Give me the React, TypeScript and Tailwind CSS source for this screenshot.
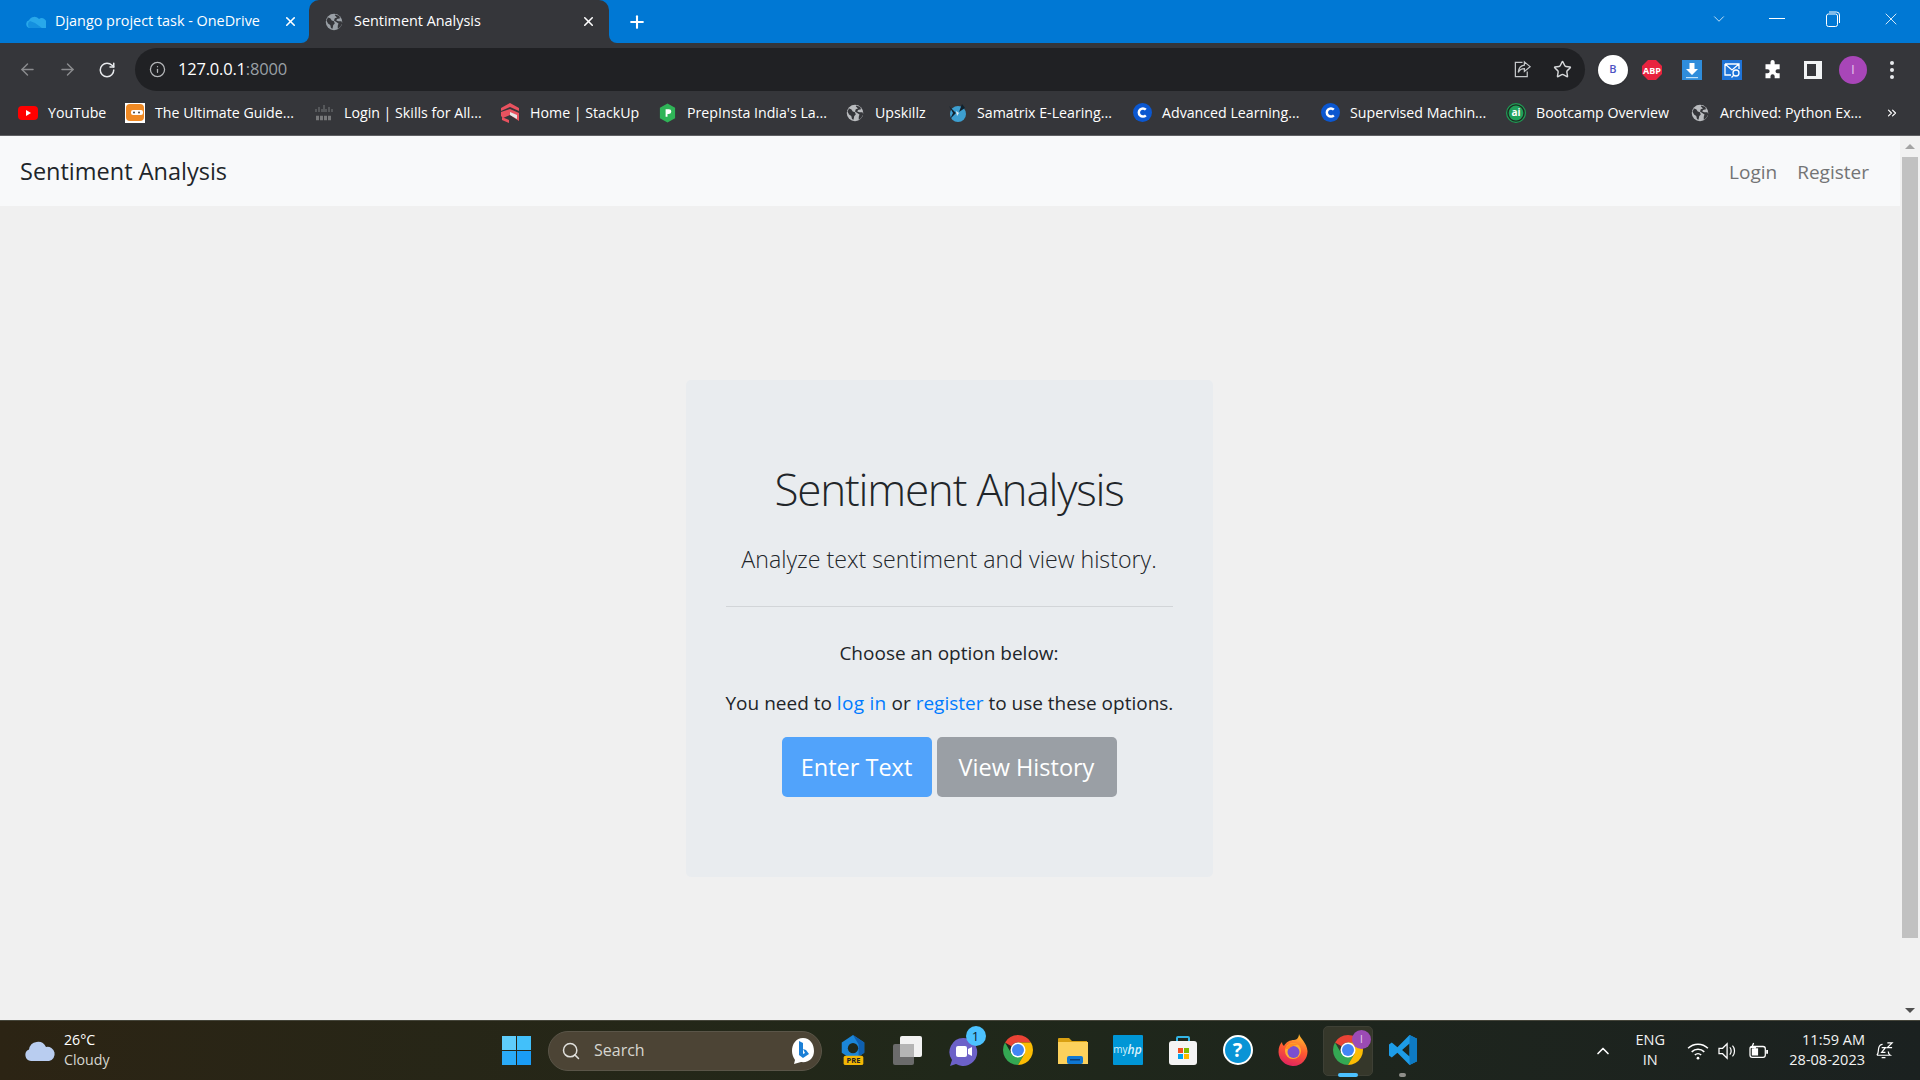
import React from 'react';
import { ArrowLeft, ArrowRight, RotateCw, Info, Star, X, Plus, ChevronDown, ChevronUp, Search, ChevronsRight } from 'lucide-react';

// Globe favicon used by Chrome for pages with no icon
function Globe({ className = 'w-[18px] h-[18px]', fg = '#35363a', bg = '#b9bbbe' }: { className?: string; fg?: string; bg?: string }) {
  return (
    <svg viewBox="0 0 24 24" className={className}>
      <circle cx="12" cy="12" r="11" fill={bg} />
      <path d="M4 6l3 1 2 3 3 1 1 3-2 2-1 5-2-1-1-4-3-2-2-4zM14 2l5 2 1 3-4 1-1 2 3 1 4 0 1 3-3 5-3 2 0-4 1-3-3-2-3-2 1-3 3-1-3-3z" fill={fg} />
    </svg>
  );
}

function ChromeLogo({ className = 'w-[32px] h-[32px]' }: { className?: string }) {
  return (
    <svg viewBox="0 0 48 48" className={className}>
      <path d="M24 4A20 20 0 0 1 41.32 14H24A10 10 0 0 0 15.34 19L6.68 14A20 20 0 0 1 24 4Z" fill="#ea4335" />
      <path d="M6.68 14A20 20 0 0 0 24 44L32.66 29H15.34Z" fill="#34a853" />
      <path d="M41.32 14A20 20 0 0 1 24 44L32.66 29 24 14Z" fill="#fbbc04" />
      <circle cx="24" cy="24" r="10" fill="#fff" />
      <circle cx="24" cy="24" r="8" fill="#4285f4" />
    </svg>
  );
}

function CoursedotC() {
  return (
    <svg viewBox="0 0 20 20" className="w-[19px] h-[19px]">
      <circle cx="10" cy="10" r="10" fill="#0b57d0" />
      <path d="M13.5 7a4.3 4.3 0 1 0 0 6" fill="none" stroke="#fff" strokeWidth="2.6" />
    </svg>
  );
}

const bookmarks: { label: string; w: string; icon: React.ReactNode }[] = [
  {
    label: 'YouTube',
    w: 'w-[57px]',
    icon: (
      <svg viewBox="0 0 20 20" className="w-[20px] h-[20px]">
        <rect x="0" y="3" width="20" height="14" rx="4" fill="#f00" />
        <path d="M8 7l5 3-5 3z" fill="#fff" />
      </svg>
    ),
  },
  {
    label: 'The Ultimate Guide...',
    w: 'w-[139px]',
    icon: (
      <svg viewBox="0 0 20 20" className="w-[20px] h-[20px]">
        <rect width="20" height="20" fill="#fff" />
        <rect x="1" y="1" width="18" height="17" rx="4" fill="#f08a24" />
        <rect x="6" y="7" width="12" height="5" rx="2" fill="#fff" />
        <circle cx="9" cy="9.5" r="1" fill="#444" />
        <circle cx="14" cy="9.5" r="1" fill="#444" />
      </svg>
    ),
  },
  {
    label: 'Login | Skills for All...',
    w: 'w-[136px]',
    icon: (
      <svg viewBox="0 0 20 20" className="w-[20px] h-[20px]" stroke="#77787a" strokeWidth="1">
        <path d="M2 6v3M5 4v5M8 6v3M10 2v7M12 6v3M15 4v5M18 6v3" />
        <path d="M2 14h16M2 16h16" strokeWidth="2.4" strokeDasharray="3 1" />
      </svg>
    ),
  },
  {
    label: 'Home | StackUp',
    w: 'w-[107px]',
    icon: (
      <svg viewBox="0 0 20 20" className="w-[20px] h-[20px]">
        <path d="M10 0l9 5v3l-9-4-9 4V5z" fill="#e8525f" />
        <path d="M1 9l9-3 9 4v8l-9-6-7 3-2-2z" fill="#e8525f" />
        <path d="M10 9l7 3v4l-7-4z" fill="#e6e6e6" />
        <path d="M2 14l7 3 0 3-7-3z" fill="#e8525f" />
      </svg>
    ),
  },
  {
    label: "PrepInsta India's La...",
    w: 'w-[138px]',
    icon: (
      <svg viewBox="0 0 20 20" className="w-[19px] h-[20px]">
        <path d="M10 0l8 4.5v11L10 20l-8-4.5v-11z" fill="#2fb457" />
        <path d="M8 14V6h3.5a2.5 2.5 0 0 1 0 5H10v3z" fill="#fff" />
      </svg>
    ),
  },
  { label: 'Upskillz', w: 'w-[52px]', icon: <Globe /> },
  {
    label: 'Samatrix E-Learing...',
    w: 'w-[135px]',
    icon: (
      <svg viewBox="0 0 20 20" className="w-[20px] h-[20px]">
        <circle cx="11" cy="11" r="8" fill="#3d9fd0" />
        <path d="M2 3l7 7-6 6 3-6zM15 1l-3 8 6-4z" fill="#10222e" />
        <path d="M9 8l3 2-2 3z" fill="#dbeaf3" />
      </svg>
    ),
  },
  { label: 'Advanced Learning...', w: 'w-[138px]', icon: <CoursedotC /> },
  { label: 'Supervised Machin...', w: 'w-[136px]', icon: <CoursedotC /> },
  {
    label: 'Bootcamp Overview',
    w: 'w-[134px]',
    icon: (
      <svg viewBox="0 0 20 20" className="w-[20px] h-[20px]">
        <circle cx="10" cy="10" r="9.4" fill="#1d2b22" stroke="#1f9d55" strokeWidth="1.2" />
        <circle cx="10" cy="10" r="7.4" fill="#21a05a" />
        <text x="10" y="13.4" textAnchor="middle" fontSize="10" fontWeight="700" fill="#fff" fontFamily="Open Sans">ai</text>
      </svg>
    ),
  },
  { label: 'Archived: Python Ex...', w: 'w-[142px]', icon: <Globe /> },
];

function WindowControls() {
  return (
    <div className="ml-auto flex items-center h-full pb-[6px] text-white">
      <ChevronDown className="w-[18px] h-[18px] mr-[41px]" strokeWidth={1} />
      <div className="w-[16px] h-px bg-white mr-[41px]" />
      <svg viewBox="0 0 14 16" className="w-[14px] h-[16px] mr-[41px]" fill="none" stroke="#fff" strokeWidth="1">
        <rect x="0.5" y="3" width="11" height="12.5" rx="2" />
        <path d="M3 1h7.5a3 3 0 0 1 3 3v8" />
      </svg>
      <X className="w-[20px] h-[20px] mr-[19px]" strokeWidth={1} />
    </div>
  );
}

function TabStrip() {
  return (
    <div className="h-[43px] bg-[#0078d4] flex items-center text-white text-[14.4px]">
      <div className="w-[309px] h-full flex items-center">
        <svg viewBox="0 0 20 12" className="ml-[26px] w-[20px] h-[14px]">
          <path d="M4 12a4 4 0 0 1-1-7.8A6 6 0 0 1 13 3a4.500 4.500 0 0 1 7 5v4z" fill="#28a8ea" />
          <path d="M4 12a4 4 0 0 1 0-7l5 2 7 5z" fill="#1490df" />
        </svg>
        <span className="ml-[9px] mb-[2px] w-[205px] whitespace-nowrap">Django project task - OneDrive</span>
        <X className="ml-[23px] w-[15px] h-[15px]" strokeWidth={2.5} />
      </div>
      <div className="relative w-[300px] h-full rounded-t-[10px] bg-[#35363a] flex items-center">
        <span className="absolute left-[-8px] bottom-0 w-[8px] h-[8px] bg-[#35363a]">
          <span className="block w-full h-full bg-[#0078d4] rounded-br-[8px]" />
        </span>
        <span className="absolute right-[-8px] bottom-0 w-[8px] h-[8px] bg-[#35363a]">
          <span className="block w-full h-full bg-[#0078d4] rounded-bl-[8px]" />
        </span>
        <Globe className="ml-[16px] w-[18px] h-[18px]" fg="#35363a" bg="#9aa0a6" />
        <span className="ml-[11px] mb-[2px] w-[227px] whitespace-nowrap">Sentiment Analysis</span>
        <X className="w-[15px] h-[15px]" strokeWidth={2.5} />
      </div>
      <Plus className="ml-[18px] w-[20px] h-[20px]" strokeWidth={2.5} />
      <WindowControls />
    </div>
  );
}

function Toolbar() {
  return (
    <div className="h-[48px] bg-[#35363a] flex items-end">
      <div className="h-[43px] flex items-center w-full">
        <ArrowLeft className="ml-[18px] w-[19px] h-[19px] text-[#8b8c8f]" strokeWidth={1.8} />
        <ArrowRight className="ml-[21px] w-[19px] h-[19px] text-[#8b8c8f]" strokeWidth={1.8} />
        <RotateCw className="ml-[21px] w-[18px] h-[18px] text-[#e8eaed]" strokeWidth={2} />
        <div className="ml-[19px] w-[1450px] h-[43px] rounded-full bg-[#202124] flex items-center">
          <Info className="ml-[14px] w-[17px] h-[17px] text-[#b5b7ba]" strokeWidth={1.8} />
          <span className="ml-[12px] text-[16.5px] text-white tracking-[-0.2px]">
            127.0.0.1<span className="text-[#9aa0a6]">:8000</span>
          </span>
          <svg viewBox="0 0 20 20" className="ml-auto w-[19px] h-[19px]" fill="none" stroke="#c4c7c9" strokeWidth="1.3">
            <path d="M10 2.500H2.500v15H15V12" />
            <path d="M12 2l6 5-6 5V9c-3 0-5 1-6.500 4 .5-5 3-7 6.500-7.500z" />
          </svg>
          <Star className="ml-[21px] mr-[13px] w-[19px] h-[19px] text-[#d6d8da]" strokeWidth={1.8} />
        </div>
        <div className="ml-[13px] w-[30px] h-[30px] rounded-full bg-white flex items-center justify-center text-[11px] font-semibold text-[#4d52c4] shadow">B</div>
        <svg viewBox="0 0 20 20" className="ml-[14px] w-[20px] h-[20px]">
          <path d="M6 0h8l6 6v8l-6 6H6l-6-6V6z" fill="#e8233f" />
          <text x="10" y="13.500" textAnchor="middle" fontSize="9" fontWeight="700" fill="#fff" fontFamily="Open Sans">ABP</text>
        </svg>
        <svg viewBox="0 0 20 20" className="ml-[20px] w-[20px] h-[20px]">
          <rect width="20" height="20" fill="#2f8ddb" />
          <path d="M7.500 3h5v6H16l-6 6-6-6h3.500z" fill="#fff" />
          <rect x="4" y="17" width="12" height="1.200" fill="#bfe0f7" />
        </svg>
        <svg viewBox="0 0 20 20" className="ml-[20px] w-[20px] h-[20px]" fill="none" stroke="#fff" strokeWidth="1.300">
          <rect width="20" height="20" fill="#1f74d8" stroke="none" />
          <path d="M3 4h14v5M3 4v11h6M3 4l7 6 7-6" />
          <circle cx="14" cy="13" r="3" />
          <path d="M12 15l-2.500 2.500" />
        </svg>
        <svg viewBox="0 0 24 24" className="ml-[21px] w-[20px] h-[20px]" fill="#fff">
          <path d="M9 2.500a2.500 2.500 0 0 1 5 0V5h6v6h-2.500a2.500 2.500 0 0 0 0 5H20v6h-6v-2.500a2.500 2.500 0 0 0-5 0V22H3v-6h2.500a2.500 2.500 0 0 0 0-5H3V5h6z" />
        </svg>
        <div className="ml-[21px] w-[18px] h-[18px] bg-[#f1f3f4] flex justify-start p-[3px] pr-[6px]">
          <div className="w-full h-full bg-[#35363a]" />
        </div>
        <div className="ml-[17px] w-[28px] h-[28px] rounded-full bg-[#a846b8] flex items-center justify-center text-[12px] text-[#e9d2ee]">I</div>
        <div className="ml-[23px] flex flex-col gap-[3px]">
          <span className="w-[4px] h-[4px] rounded-full bg-[#e8eaed]" />
          <span className="w-[4px] h-[4px] rounded-full bg-[#e8eaed]" />
          <span className="w-[4px] h-[4px] rounded-full bg-[#e8eaed]" />
        </div>
      </div>
    </div>
  );
}

function BookmarksBar() {
  return (
    <div className="h-[45px] bg-[#35363a] border-b border-[#5f6063] flex items-center pl-[18px] gap-[20px] text-[14.2px] text-white">
      {bookmarks.map((b) => (
        <div key={b.label} className="flex items-center gap-[10px]">
          <div className="w-[20px] flex justify-center">{b.icon}</div>
          <span className={`${b.w} whitespace-nowrap`}>{b.label}</span>
        </div>
      ))}
      <ChevronsRight className="ml-[3px] w-[14px] h-[14px]" strokeWidth={2} />
    </div>
  );
}

function Scrollbar() {
  return (
    <div className="w-[20px] bg-[#f1f1f1] flex flex-col items-stretch">
      <div className="h-[21px] flex items-center justify-center">
        <div className="w-0 h-0 border-x-[5px] border-x-transparent border-b-[5px] border-b-[#a3a3a3]" />
      </div>
      <div className="h-[781px] mx-[2px] bg-[#c1c1c1]" />
      <div className="flex-1" />
      <div className="h-[20px] flex items-center justify-center">
        <div className="w-0 h-0 border-x-[5px] border-x-transparent border-t-[5px] border-t-[#505050]" />
      </div>
    </div>
  );
}

function Page() {
  return (
    <div className="h-[884px] flex bg-[#f0f0f0] text-[#212529]">
      <div className="flex-1 flex flex-col">
        <nav className="h-[70px] bg-[#f8f9fa] flex items-center px-[20px] pt-[2px]">
          <span className="text-[23.5px]">Sentiment Analysis</span>
          <div className="ml-auto mr-[11px] flex gap-[20px] text-[19px] text-[#737475]">
            <a>Login</a>
            <a>Register</a>
          </div>
        </nav>
        <div className="flex justify-center pt-[174px] pr-[2px]">
          <div className="w-[527px] h-[497px] bg-[#e9ecef] rounded-[5px] px-[40px] pt-[75px] text-center">
            <h1 className="text-[44px] tracking-[-1.2px] font-light leading-[68px]">Sentiment Analysis</h1>
            <p className="mt-[19px] text-[23.2px] font-light leading-[34px]">Analyze text sentiment and view history.</p>
            <hr className="mt-[30px] border-[#d2d5d8]" />
            <p className="mt-[31px] text-[19px] leading-[30px]">Choose an option below:</p>
            <p className="mt-[20px] text-[19px] leading-[30px] whitespace-nowrap">
              You need to <a className="text-[#007bff] tracking-[0.3px]">log in</a> or <a className="text-[#007bff]">register</a> to use these options.
            </p>
            <div className="mt-[19px] flex justify-center gap-[5px] text-[23.5px] text-white">
              <button className="w-[150px] h-[60px] pt-[2px] rounded-[5px] bg-[#51a3fb]">Enter Text</button>
              <button className="w-[180px] h-[60px] pt-[2px] rounded-[5px] bg-[#9a9fa5]">View History</button>
            </div>
          </div>
        </div>
      </div>
      <Scrollbar />
    </div>
  );
}

function TaskIcon({ children }: { children: React.ReactNode }) {
  return <div className="w-[55px] h-[50px] flex items-center justify-center">{children}</div>;
}

function Taskbar() {
  return (
    <div className="relative h-[60px] border-t border-[#45453a] bg-linear-to-r from-[#2c2414] via-[#20281a] to-[#1b2120] flex items-center text-white">
      <svg viewBox="0 0 32 24" className="ml-[24px] w-[32px] h-[24px]">
        <path d="M7 22a6 6 0 0 1-2-11.500A9 9 0 0 1 22 8a7 7 0 0 1 3 14z" fill="#b9cdf0" />
      </svg>
      <div className="ml-[8px] mb-[2px] w-[60px] text-[14.2px] leading-[20px]">
        <div>26°C</div>
        <div className="text-[#d6d6d0]">Cloudy</div>
      </div>
      <div className="ml-[378px] grid grid-cols-2 gap-[1px] w-[29px] h-[29px]">
        <span className="bg-[#5fcdfb]" />
        <span className="bg-[#42c0fa]" />
        <span className="bg-[#2aaaf7]" />
        <span className="bg-[#1a9cf5]" />
      </div>
      <div className="ml-[17px] w-[274px] h-[40px] rounded-full bg-[#4c4435] border border-[#5a5548] flex items-center">
        <Search className="ml-[12px] w-[20px] h-[20px] text-[#e0e0dc]" strokeWidth={1.8} />
        <span className="ml-[13px] mb-[1px] text-[16px] text-[#d6d6d0]">Search</span>
        <svg viewBox="0 0 24 28" className="ml-auto mr-[6px] w-[24px] h-[28px]">
          <path d="M12 1c7 0 11 6 11 13s-5 12-13 11l-7 2 1-4C2 20 1 17 1 14 1 7 5 1 12 1z" fill="#fff" />
          <path d="M8 4v14l4 3 6-4-3-4-3-1 2 4-2 1V6z" fill="#1b7fd6" />
        </svg>
      </div>
      <div className="ml-[3px] flex items-center">
        <TaskIcon>
          <svg viewBox="0 0 32 34" className="w-[30px] h-[32px] mb-[2px]">
            <path d="M16 1l12 8v11l-12 8-12-8V9z" fill="#1b86d8" />
            <path d="M16 1l12 8v11l-6 4V11z" fill="#0f5fb0" />
            <circle cx="16" cy="15" r="5.500" fill="#20281a" />
            <rect x="6" y="23" width="21" height="10" rx="2" fill="#f2b705" />
            <text x="16.500" y="31" textAnchor="middle" fontSize="8" fontWeight="700" fill="#222" fontFamily="Open Sans">PRE</text>
          </svg>
        </TaskIcon>
        <TaskIcon>
          <svg viewBox="0 0 30 30" className="w-[30px] h-[30px] mb-[2px]">
            <rect x="0" y="9" width="21" height="21" rx="2" fill="#6b6b6b" />
            <rect x="7" y="1" width="22" height="21" rx="2" fill="#f2f2f2" />
            <rect x="7" y="9" width="14" height="13" fill="#b5b5b5" />
          </svg>
        </TaskIcon>
        <TaskIcon>
          <div className="relative mb-[2px]">
            <svg viewBox="0 0 30 30" className="w-[30px] h-[30px] mt-[4px]">
              <path d="M15 1a14 14 0 1 1-7 26l-6 2 2-6A14 14 0 0 1 15 1z" fill="#6c61c8" />
              <rect x="8" y="9" width="11" height="11" rx="2" fill="#fff" />
              <path d="M20 12l4-2v9l-4-2z" fill="#fff" />
            </svg>
            <span className="absolute right-[-8px] top-[-7px] w-[20px] h-[20px] rounded-full bg-[#4cc2ff] text-[#10222e] text-[13px] leading-[20px] text-center">1</span>
          </div>
        </TaskIcon>
        <TaskIcon>
          <ChromeLogo className="w-[36px] h-[36px] mb-[2px]" />
        </TaskIcon>
        <TaskIcon>
          <svg viewBox="0 0 30 30" className="w-[30px] h-[30px] mb-[2px]">
            <path d="M0 4a1 1 0 0 1 1-1h10l3 3h15v4H0z" fill="#d9a012" />
            <path d="M0 7h30v22H0z" fill="#fcd15c" />
            <rect x="9" y="21" width="16" height="8" rx="2" fill="#0f78d4" />
            <rect x="12" y="24" width="10" height="1.500" fill="#0a3f7a" />
          </svg>
        </TaskIcon>
        <TaskIcon>
          <div className="w-[30px] h-[30px] mb-[2px] bg-[#0096d6] rounded-[1px] text-[#d9f1fb] text-[10px] flex items-center justify-center">my<i className="font-semibold text-[12px]">hp</i></div>
        </TaskIcon>
        <TaskIcon>
          <svg viewBox="0 0 30 30" className="w-[30px] h-[30px] mb-[2px]">
            <path d="M9 6V3a1 1 0 0 1 1-1h10a1 1 0 0 1 1 1v3" fill="none" stroke="#33b5e5" strokeWidth="2" />
            <rect x="1" y="6" width="28" height="24" rx="3" fill="#f4f4f4" />
            <rect x="10" y="13" width="5" height="5" fill="#f25022" />
            <rect x="16" y="13" width="5" height="5" fill="#7fba00" />
            <rect x="10" y="19" width="5" height="5" fill="#00a4ef" />
            <rect x="16" y="19" width="5" height="5" fill="#ffb900" />
          </svg>
        </TaskIcon>
        <TaskIcon>
          <div className="w-[30px] h-[30px] mb-[2px] rounded-full bg-[#0a94d6] border-2 border-white text-white text-[20px] font-bold leading-[26px] text-center">?</div>
        </TaskIcon>
        <TaskIcon>
          <svg viewBox="0 0 30 32" className="w-[30px] h-[32px] mb-[2px]">
            <defs>
              <linearGradient id="ffBody" x1="0.7" y1="0" x2="0.4" y2="1">
                <stop offset="0" stopColor="#ffc02e" />
                <stop offset="0.5" stopColor="#ff5a30" />
                <stop offset="1" stopColor="#e0245e" />
              </linearGradient>
            </defs>
            <path d="M21 0c1 4 8 9 8.500 17A14.500 14.500 0 0 1 .5 18C.5 13 2 10 4 8c0 2 1 3 2 4 2-4 6-6 10-6 3 0 5-3 5-6z" fill="url(#ffBody)" />
            <circle cx="15" cy="17" r="8" fill="#ffb02e" />
            <circle cx="15.500" cy="18" r="6" fill="#7b4fd0" />
            <path d="M7 15c2-5 8-7 13-4-4 0-7 1-9 4z" fill="#ff8a25" />
          </svg>
        </TaskIcon>
        <div className="relative w-[55px] h-[50px] flex items-center justify-center">
          <div className="w-[50px] h-[50px] rounded-[5px] bg-[#35372a] border border-[#3e4035] flex items-center justify-center">
            <ChromeLogo className="w-[36px] h-[36px] mb-[2px]" />
          </div>
          <span className="absolute right-[4px] top-[4px] w-[19px] h-[19px] rounded-full bg-[#9b4bb5] text-[#e7cfee] text-[10px] leading-[19px] text-center">I</span>
          <span className="absolute bottom-[-1px] left-[18px] w-[20px] h-[4px] rounded-full bg-[#4cc2ff]" />
        </div>
        <div className="relative w-[55px] h-[50px] flex items-center justify-center">
          <svg viewBox="0 0 30 32" className="w-[28px] h-[30px] mb-[2px]">
            <path d="M22 0l8 4v24l-8 4-13-13-6 5-3-2v-12l3-2 6 5zM22 9l-8 7 8 7z" fill="#1d9ce8" />
            <path d="M22 0l8 4v24l-8 4z" fill="#0e7ac4" />
          </svg>
          <span className="absolute bottom-[-1px] left-[24px] w-[7px] h-[4px] rounded-full bg-[#8f8f8a]" />
        </div>
      </div>
      <ChevronUp className="absolute left-[1593px] w-[20px] h-[20px]" strokeWidth={2} />
      <div className="ml-auto flex items-center mr-[26px]">
        <div className="mb-[2px] text-[14.500px] leading-[20px] text-center text-[#f2f2f2]">
          <div>ENG</div>
          <div>IN</div>
        </div>
        <svg viewBox="0 0 24 20" className="ml-[22px] w-[22px] h-[18px]" fill="none" stroke="#fff" strokeWidth="1.700">
          <path d="M1 7c6-6 16-6 22 0M5 11c4-4 10-4 14 0M8.500 14.500c2-2 5-2 7 0" />
          <circle cx="12" cy="18" r="1.500" fill="#fff" stroke="none" />
        </svg>
        <svg viewBox="0 0 24 20" className="ml-[8px] w-[22px] h-[18px]" fill="none" stroke="#fff" strokeWidth="1.400">
          <path d="M2 7h4l5-5v16l-5-5H2zM14 6c2 2 2 6 0 8M17 4c3 3 3 9 0 12" />
        </svg>
        <svg viewBox="0 0 24 20" className="ml-[9px] w-[22px] h-[18px]" fill="none" stroke="#fff" strokeWidth="1.400">
          <rect x="2" y="5" width="17" height="12" rx="2.500" />
          <rect x="4" y="7" width="7" height="8" fill="#fff" stroke="none" />
          <path d="M21 9v4" strokeWidth="2" />
          <path d="M6 1L4 6h4l-2 5" />
        </svg>
        <div className="ml-[15px] mb-[2px] w-[80px] text-[14.500px] leading-[20px] text-right whitespace-nowrap text-[#f2f2f2]">
          <div>11:59 AM</div>
          <div>28-08-2023</div>
        </div>
        <svg viewBox="0 0 20 20" className="ml-[10px] w-[19px] h-[19px]" fill="none" stroke="#fff" strokeWidth="1.300">
          <path d="M2 15c2-2 1-4 2-8 .5-2 2-3.500 4-3.500M2 15h14c-1.500-1-2-2-2-4M7 17.500h4" />
          <path d="M7 7h4l-4 5h4M13 2h5l-5 5h5" />
        </svg>
      </div>
    </div>
  );
}

export default function App() {
  return (
    <div className="w-[1920px] h-[1080px] overflow-hidden font-['Open_Sans','Noto_Sans',sans-serif]">
      <TabStrip />
      <Toolbar />
      <BookmarksBar />
      <Page />
      <Taskbar />
    </div>
  );
}
